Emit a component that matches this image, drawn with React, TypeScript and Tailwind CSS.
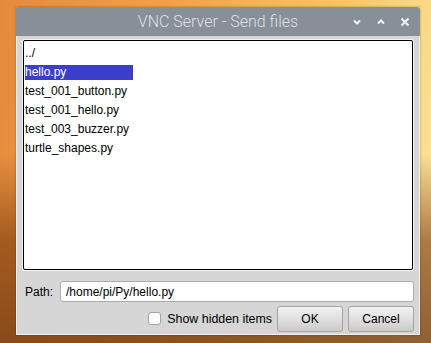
import React from 'react';

const files = ['../', 'hello.py', 'test_001_button.py', 'test_001_hello.py', 'test_003_buzzer.py', 'turtle_shapes.py'];

const App: React.FC = () => {
    const selected = 'hello.py';

    return (
        <div
            className="w-[431px] h-[343px] overflow-hidden pt-[7px] pl-[16px] bg-[linear-gradient(100deg,#e48a3c_0%,#f2a244_35%,#f8c660_70%,#fbe7a6_100%)] relative"
            style={{ fontFamily: '"Liberation Sans", Arial, sans-serif' }}
        >
            {/* darker lower half of the wallpaper */}
            <div className="absolute inset-0 bg-[linear-gradient(180deg,rgba(0,0,0,0)_0%,rgba(0,0,0,0)_45%,rgba(120,55,10,0.6)_70%,rgba(100,45,10,0.72)_100%)]" />

            <div className="relative w-[404px] h-[328px] flex flex-col shadow-[0_0_2px_rgba(0,0,0,0.35)]">
                {/* Title bar */}
                <div className="h-[29px] bg-[#878f98] rounded-t-[3px] flex items-center relative">
                    <div
                        className="flex-1 text-center text-[16px] text-[#dde1e5]"
                        style={{ fontFamily: 'Roboto, "Open Sans", sans-serif', fontWeight: 300 }}
                    >
                        VNC Server - Send files
                    </div>
                    <div className="absolute right-[10px] top-0 h-full flex items-center gap-[14px]">
                        <svg width="10" height="10" viewBox="0 0 10 10">
                            <path d="M2 3.5 L5 6.5 L8 3.5" stroke="#f2f4f6" strokeWidth="2" fill="none" />
                        </svg>
                        <svg width="10" height="10" viewBox="0 0 10 10">
                            <path d="M2 6.5 L5 3.5 L8 6.5" stroke="#f2f4f6" strokeWidth="2" fill="none" />
                        </svg>
                        <svg width="10" height="10" viewBox="0 0 10 10">
                            <path d="M1.5 1.5 L8.5 8.5 M8.5 1.5 L1.5 8.5" stroke="#f2f4f6" strokeWidth="2" fill="none" />
                        </svg>
                    </div>
                </div>

                {/* Body */}
                <div className="flex-1 bg-[#d6d6d6] border-x border-b border-[#f0f0f0] px-[5px] pt-[3px] pb-[2px] flex flex-col text-[12px] text-black">
                    {/* File list */}
                    <div className="h-[232px] border border-[#f4f4f4] rounded-[2px]">
                        <div className="h-full bg-white border border-black rounded-[2px] pt-[3px] pl-[1px]">
                            {files.map((f) => (
                                <div key={f} className="h-[19px] flex items-center">
                                    <span
                                        className={`leading-[15px] ${f === selected ? 'bg-[#3b3dcb] text-white w-[108px]' : ''}`}
                                    >
                                        {f}
                                    </span>
                                </div>
                            ))}
                        </div>
                    </div>

                    {/* Path row */}
                    <div className="mt-[10px] flex items-center">
                        <span className="w-[38px] pl-[3px]">Path:</span>
                        <div className="flex-1 h-[21px] bg-white border border-[#ababab] rounded-[3px] flex items-center pl-[5px]">
                            /home/pi/Py/hello.py
                        </div>
                    </div>

                    {/* Buttons row */}
                    <div className="mt-[4px] flex items-center justify-end gap-[5px]">
                        <label className="flex items-center gap-[6px]">
                            <span className="w-[13px] h-[13px] bg-white border border-[#a3a3a3] rounded-[3px]" />
                            <span className="text-[12.4px]">Show hidden items</span>
                        </label>
                        <button className="w-[66px] h-[26px] border border-[#a4a4a4] rounded-[3px] bg-[linear-gradient(180deg,#f2f2f2_0%,#dcdcdc_60%,#c9c9c9_100%)]">
                            OK
                        </button>
                        <button className="w-[66px] h-[26px] border border-[#a4a4a4] rounded-[3px] bg-[linear-gradient(180deg,#f2f2f2_0%,#dcdcdc_60%,#c9c9c9_100%)]">
                            Cancel
                        </button>
                    </div>
                </div>
            </div>
        </div>
    );
};

export default App;
